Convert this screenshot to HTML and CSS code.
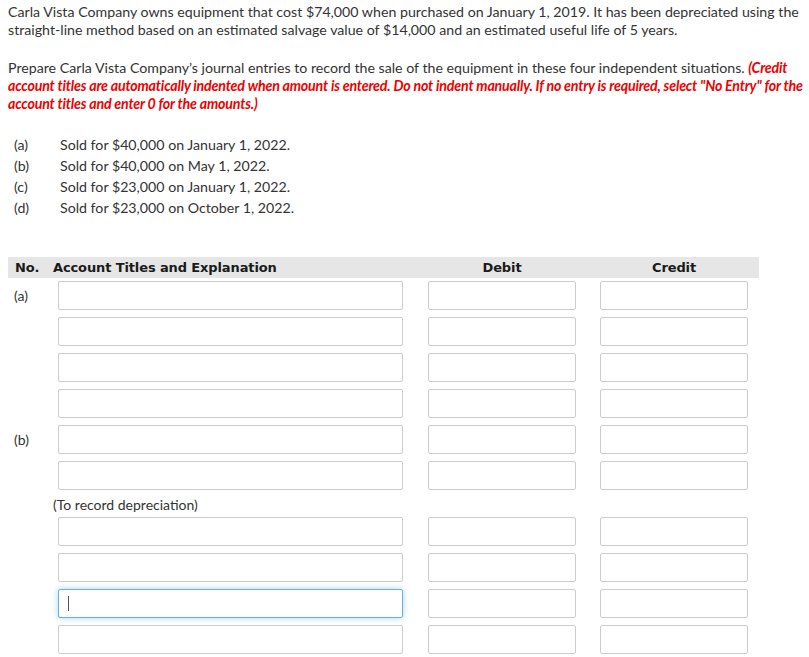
FILE: index.html
```html
<!DOCTYPE html>
<html lang="en">
<head>
<meta charset="utf-8">
<title>Carla Vista Company – Equipment Sale</title>
<link rel="stylesheet" href="styles.css">
</head>
<body>
  <p class="para">Carla Vista Company owns equipment that cost $74,000 when purchased on January 1, 2019. It has been depreciated using the straight-line method based on an estimated salvage value of $14,000 and an estimated useful life of 5 years.</p>

  <p class="para para-gap">Prepare Carla Vista Company’s journal entries to record the sale of the equipment in these four independent situations. <span class="note">(Credit account titles are automatically indented when amount is entered. Do not indent manually. If no entry is required, select "No Entry" for the account titles and enter 0 for the amounts.)</span></p>

  <ul class="cases">
    <li><span class="case-label">(a)</span><span>Sold for $40,000 on January 1, 2022.</span></li>
    <li><span class="case-label">(b)</span><span>Sold for $40,000 on May 1, 2022.</span></li>
    <li><span class="case-label">(c)</span><span>Sold for $23,000 on January 1, 2022.</span></li>
    <li><span class="case-label">(d)</span><span>Sold for $23,000 on October 1, 2022.</span></li>
  </ul>

  <div class="journal">
    <div class="journal-head">
      <div class="col-no">No.</div>
      <div class="col-title">Account Titles and Explanation</div>
      <div class="col-debit amount-head">Debit</div>
      <div class="col-credit amount-head">Credit</div>
    </div>

    <div class="row">
      <div class="row-label">(a)</div>
      <div class="field"></div>
      <div class="col-debit"><div class="field"></div></div>
      <div class="col-credit"><div class="field"></div></div>
    </div>
    <div class="row">
      <div class="row-label"></div>
      <div class="field"></div>
      <div class="col-debit"><div class="field"></div></div>
      <div class="col-credit"><div class="field"></div></div>
    </div>
    <div class="row">
      <div class="row-label"></div>
      <div class="field"></div>
      <div class="col-debit"><div class="field"></div></div>
      <div class="col-credit"><div class="field"></div></div>
    </div>
    <div class="row">
      <div class="row-label"></div>
      <div class="field"></div>
      <div class="col-debit"><div class="field"></div></div>
      <div class="col-credit"><div class="field"></div></div>
    </div>

    <div class="row">
      <div class="row-label">(b)</div>
      <div class="field"></div>
      <div class="col-debit"><div class="field"></div></div>
      <div class="col-credit"><div class="field"></div></div>
    </div>
    <div class="row">
      <div class="row-label"></div>
      <div class="field"></div>
      <div class="col-debit"><div class="field"></div></div>
      <div class="col-credit"><div class="field"></div></div>
    </div>

    <div class="explain">(To record depreciation)</div>

    <div class="row">
      <div class="row-label"></div>
      <div class="field"></div>
      <div class="col-debit"><div class="field"></div></div>
      <div class="col-credit"><div class="field"></div></div>
    </div>
    <div class="row">
      <div class="row-label"></div>
      <div class="field"></div>
      <div class="col-debit"><div class="field"></div></div>
      <div class="col-credit"><div class="field"></div></div>
    </div>
    <div class="row">
      <div class="row-label"></div>
      <div class="field is-focused"><span class="caret"></span></div>
      <div class="col-debit"><div class="field"></div></div>
      <div class="col-credit"><div class="field"></div></div>
    </div>
    <div class="row">
      <div class="row-label"></div>
      <div class="field"></div>
      <div class="col-debit"><div class="field"></div></div>
      <div class="col-credit"><div class="field"></div></div>
    </div>
  </div>
</body>
</html>
```

FILE: styles.css
```css
html, body {
  background: #ffffff;
}

body {
  margin: 0;
  padding: 3px 0 0 8px;
  font-family: Lato, "Open Sans", sans-serif;
  font-size: 14.2px;
  color: #333333;
}

.para {
  margin: 0;
  line-height: 18px;
}

.para-gap {
  margin-top: 20px;
}

.note {
  color: #ee0000;
  font-weight: bold;
  font-style: italic;
  letter-spacing: -0.18px;
}

.cases {
  list-style: none;
  margin: 21px 0 0 0;
  padding: 0;
}

.cases li {
  display: flex;
  line-height: 21px;
}

.case-label {
  width: 52px;
  padding-left: 6px;
  box-sizing: border-box;
  flex: none;
}

.journal {
  margin-top: 39px;
  width: 751px;
  display: flex;
  flex-direction: column;
  font-size: 14px;
}

.journal-head,
.row {
  display: grid;
  grid-template-columns: 50px 345px 173px 172px;
}

.journal-head {
  background: #e6e6e6;
  height: 21px;
  align-items: center;
  font-family: "DejaVu Sans", Verdana, sans-serif;
  font-weight: bold;
  font-size: 13px;
  color: #1a1a1a;
  letter-spacing: -0.12px;
}

.col-no {
  padding-left: 7px;
}

.col-title {
  margin-left: -5px;
}

.col-debit {
  padding-left: 25px;
}

.col-credit {
  padding-left: 24px;
}

.amount-head {
  text-align: center;
  width: 148px;
  box-sizing: content-box;
}

.row {
  margin-top: 7px;
  align-items: center;
}

.journal-head + .row {
  margin-top: 3px;
}

.row-label {
  padding-left: 6px;
}

.field {
  height: 29px;
  box-sizing: border-box;
  border: 1px solid #cccccc;
  border-radius: 2px;
  background: #ffffff;
  display: flex;
  align-items: center;
}

.col-debit .field,
.col-credit .field {
  width: 148px;
}

.field.is-focused {
  border-color: #66afe9;
  box-shadow: 0 0 6px rgba(102, 175, 233, 0.55);
}

.caret {
  display: block;
  width: 1px;
  height: 15px;
  margin-left: 9px;
  background: #555555;
}

.explain {
  height: 27px;
  box-sizing: border-box;
  padding: 7px 0 0 45px;
  line-height: 16px;
}

.explain + .row {
  margin-top: 0;
}
```
